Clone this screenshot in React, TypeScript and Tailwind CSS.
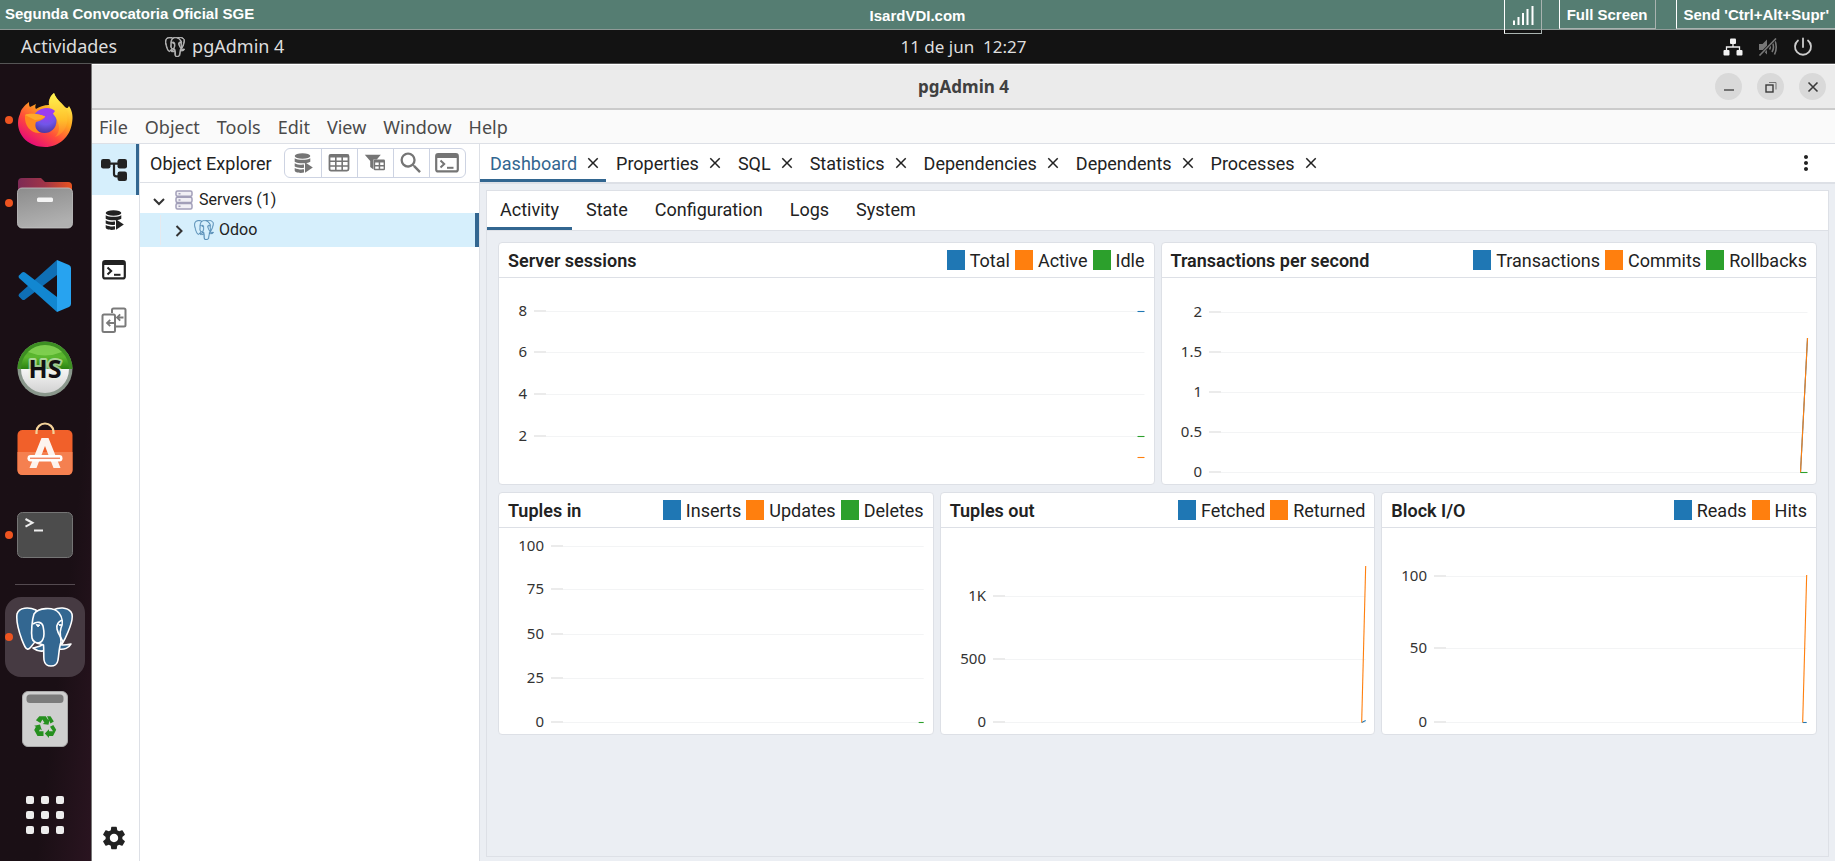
import React from "react";
import { MdClose, MdMoreVert, MdSearch, MdSettings } from "react-icons/md";
import { SiPostgresql } from "react-icons/si";

const BLUE = "#1f77b4";
const ORANGE = "#ff7f0e";
const GREEN = "#2ca02c";

/* ---------- Icons ---------- */

function DbPlay({ className }: { className: string }) {
  return (
    <svg viewBox="0 0 20 20" className={className} fill="currentColor" aria-hidden="true">
      <ellipse cx="9.5" cy="3" rx="7.8" ry="2.8" />
      <path d="M1.7 5.2c3 2.2 12.6 2.2 15.6 0v3.6c-3.5 2-12.1 2-15.6 0z" />
      <path d="M1.7 10.2c2.5 1.5 6.3 1.8 9.3 1.4v3.2c-3.3.5-7.3.1-9.3-1.2z" />
      <path d="M1.7 15c2.5 1.4 6.3 1.7 9.3 1.3v3.3c-4 .7-9.3.1-9.3-2z" />
      <path d="M12 9.3v10.4l7.8-5.2z" />
    </svg>
  );
}

function TreeIcon() {
  return (
    <svg viewBox="0 0 26 24" className="h-6 w-[26px]" fill="currentColor" aria-hidden="true">
      <rect x="0" y="1" width="9.5" height="9.5" rx="2.2" />
      <rect x="16.5" y="1" width="9.5" height="9.5" rx="2.2" />
      <rect x="16.5" y="13.5" width="9.5" height="9.5" rx="2.2" />
      <path d="M9 5.7h8M13 5.7v10.3q0 2.3 2.3 2.3h2" fill="none" stroke="currentColor" strokeWidth="2.2" />
    </svg>
  );
}

function TerminalIcon({ className }: { className: string }) {
  return (
    <svg viewBox="0 0 24 20" className={className} fill="none" stroke="currentColor" aria-hidden="true">
      <rect x="1.2" y="1.2" width="21.6" height="17.2" rx="2" strokeWidth="2.2" />
      <path d="M1.5 3.2h21" strokeWidth="3.6" />
      <path d="M5.5 7.5l3.7 3.5-3.7 3.5" strokeWidth="2" />
      <path d="M12 14.8h6.5" strokeWidth="2" />
    </svg>
  );
}

function CompareIcon() {
  return (
    <svg viewBox="0 0 26 26" className="size-[26px]" fill="none" stroke="currentColor" strokeWidth="2" aria-hidden="true">
      <path d="M11 6V3q0-1.5 1.5-1.5h10.500q1.500 0 1.500 1.500v15q0 1.500-1.500 1.500h-8" />
      <rect x="1.5" y="7.5" width="12.5" height="17.5" rx="1.5" />
      <path d="M6 16h8M9.2 12.8L6 16l3.2 3.2M16 10.5h6.5M19.2 7.3L16 10.5l3.2 3.2" strokeWidth="1.8" />
    </svg>
  );
}

function GridIcon() {
  return (
    <svg viewBox="0 0 22 20" className="h-5 w-[22px]" fill="none" stroke="currentColor" aria-hidden="true">
      <rect x="1.5" y="1.8" width="19" height="15.8" rx="1.5" strokeWidth="1.8" />
      <path d="M1.5 3h19" strokeWidth="3" />
      <path d="M1.5 8.3h19M1.5 13h19M7.8 3v15M14.2 3v15" strokeWidth="1.6" />
    </svg>
  );
}

function FilterGridIcon() {
  return (
    <svg viewBox="0 0 22 20" className="h-5 w-[22px]" fill="currentColor" aria-hidden="true">
      <path d="M.8 1.8h16l-4 4.8h-3.300v9.800l-3.300-2.400V8z" />
      <rect x="9.8" y="6.6" width="11.2" height="10.6" rx="1.2" />
      <path d="M11.2 9.6h3.500v2.300h-3.500zM16.200 9.600h3.400v2.300h-3.400zM11.200 13.400h3.500v2.300h-3.500zM16.200 13.400h3.400v2.300h-3.400z" fill="#fff" />
    </svg>
  );
}

function ServersIcon() {
  return (
    <svg viewBox="0 0 18 20" className="h-5 w-[18px]" fill="#f1f0f5" stroke="#a29fb9" strokeWidth="1.5" aria-hidden="true">
      <rect x="1" y="1" width="16" height="5.3" rx="1.5" />
      <rect x="1" y="7.3" width="16" height="5.3" rx="1.5" />
      <rect x="1" y="13.6" width="16" height="5.3" rx="1.5" />
      <path d="M3.5 3.7h2M3.5 10h2M3.5 16.2h2" />
    </svg>
  );
}

function Chevron({ open }: { open?: boolean }) {
  return (
    <svg viewBox="0 0 14 14" className="size-[14px]" fill="none" stroke="#333" strokeWidth="2" aria-hidden="true">
      <path d={open ? "M2 6L7 11l5-5" : "M4.5 3L9.5 8l-5 5"} />
    </svg>
  );
}

function Firefox() {
  return (
    <svg viewBox="0 0 56 56" className="size-14" aria-hidden="true">
      <defs>
        <linearGradient id="ffBody" x1="0.85" y1="0.1" x2="0.25" y2="1">
          <stop offset="0" stopColor="#fff44f" />
          <stop offset="0.35" stopColor="#ffa51f" />
          <stop offset="0.65" stopColor="#ff4a3c" />
          <stop offset="1" stopColor="#e3057e" />
        </linearGradient>
        <radialGradient id="ffBall" cx="0.55" cy="0.2" r="0.9">
          <stop offset="0" stopColor="#a43af5" />
          <stop offset="0.5" stopColor="#7156e8" />
          <stop offset="1" stopColor="#41308f" />
        </radialGradient>
        <linearGradient id="ffFlame" x1="0.6" y1="0" x2="0.6" y2="1">
          <stop offset="0" stopColor="#fff552" />
          <stop offset="0.6" stopColor="#ffc02b" />
          <stop offset="1" stopColor="#ff7a2a" />
        </linearGradient>
      </defs>
      <path d="M3 22c1-5 4-8 9-12 0 2 0 4 1 5l6-3c-1 2-1 4 0 5 3-2 8-4 13-4-1-5 2-10 5-12 2 6 7 9 11 14 2 2 3 1 4-1 4 6 4 12 3 17-2 14-13 24-27 24C12 55 1 44 1 31c0-4 1-7 2-9z" fill="url(#ffBody)" />
      <circle cx="27.5" cy="29" r="12" fill="url(#ffBall)" />
      <path d="M37 1c2 7 9 11 12 18 4 10 0 22-11 26 4-4 5-9 3-14-1-6-6-9-7-13-3-6-2-13 3-17z" fill="url(#ffFlame)" />
      <path d="M8 23c5-2 11-1 16 0 3 0 4 1 4 2-2 3-6 4-9 5-2 5 1 9 5 11-10 1-17-7-16-18z" fill="#ff8a1e" />
      <path d="M8 23c5-2 11-1 16 0 3 0 4 1 4 2-3 2-7 3-10 3z" fill="#ffa92b" />
      <path d="M20 20c5-5 14-5 18-1l-3 4-8 1-4-2z" fill="#9a3df2" />
    </svg>
  );
}

function Files() {
  return (
    <svg viewBox="0 0 56 52" className="h-[52px] w-14" aria-hidden="true">
      <defs>
        <linearGradient id="flBack" x1="0" y1="0" x2="1" y2="0">
          <stop offset="0" stopColor="#7d2a55" />
          <stop offset="0.5" stopColor="#a03447" />
          <stop offset="1" stopColor="#e95420" />
        </linearGradient>
        <linearGradient id="flFront" x1="0" y1="0" x2="0.3" y2="1">
          <stop offset="0" stopColor="#8c8c8c" />
          <stop offset="1" stopColor="#b0b0b0" />
        </linearGradient>
      </defs>
      <path d="M1 5q0-4 4-4h19l4 4h23q4 0 4 4v16H1z" fill="url(#flBack)" />
      <rect x="0.5" y="11" width="55" height="40" rx="4.5" fill="url(#flFront)" stroke="#c6c6c6" strokeWidth="0.8" />
      <rect x="20" y="20.5" width="16" height="4.5" rx="1.5" fill="#f4f4f4" />
    </svg>
  );
}

function VsCode() {
  return (
    <svg viewBox="0 0 54 54" className="size-[54px]" aria-hidden="true">
      <path d="M39 1L1 35q-1 1.5 0 2.5l3 3q1.5 1 3 0L39 16z" fill="#0f6fb5" />
      <path d="M39 53L1 19q-1-1.5 0-2.5l3-3q1.5-1 3 0L39 38z" fill="#1287d1" />
      <path d="M39 1l12 5q2 1 2 3v36q0 2-2 3l-12 5z" fill="#27a3f0" />
    </svg>
  );
}

function HeidiSql() {
  return (
    <svg viewBox="0 0 56 56" className="size-14" aria-hidden="true">
      <defs>
        <linearGradient id="hsTop" x1="0" y1="0" x2="0" y2="1">
          <stop offset="0" stopColor="#4fa82a" />
          <stop offset="0.5" stopColor="#5cb82f" />
          <stop offset="1" stopColor="#2b8210" />
        </linearGradient>
        <linearGradient id="hsLow" x1="0" y1="0" x2="0" y2="1">
          <stop offset="0" stopColor="#f6f6f6" />
          <stop offset="1" stopColor="#d2d2d2" />
        </linearGradient>
      </defs>
      <circle cx="28" cy="28" r="27.5" fill="#8a978c" />
      <path d="M.5 28a27.5 27.5 0 0 1 55 0z" fill="#3d8f22" />
      <path d="M4 28a24 24 0 0 1 48 0z" fill="url(#hsTop)" />
      <path d="M4 28a24 24 0 0 0 48 0z" fill="url(#hsLow)" />
      <path d="M11 11a24 24 0 0 1 34 0q-17 7-34 0z" fill="#8fda5c" opacity="0.7" />
      <text x="28" y="37" textAnchor="middle" fontSize="25" fontWeight="700" fontFamily="Open Sans, sans-serif" fill="#111" stroke="#e8f3e0" strokeOpacity="0.6" strokeWidth="4" strokeLinejoin="round" paintOrder="stroke">HS</text>
    </svg>
  );
}

function Software() {
  return (
    <svg viewBox="0 0 56 60" className="h-[60px] w-14" aria-hidden="true">
      <rect x="0.5" y="8" width="55" height="45" rx="5" fill="#f1602a" />
      <path d="M.5 30h55v18q0 5-5 5h-45q-5 0-5-5z" fill="#f58050" />
      <path d="M19.5 12V9.5a8.5 8 0 0 1 17 0V12" fill="none" stroke="#f3d29a" strokeWidth="2.2" />
      <path d="M24.5 16h7l12 30h-7L28 24l-8.500 22h-7z" fill="#fdf3ee" />
      <rect x="10.5" y="33" width="35" height="6.5" rx="3.2" fill="#fff" />
      <path d="M13 36.3h30" stroke="#f08a68" strokeWidth="1.5" />
    </svg>
  );
}

function TerminalApp() {
  return (
    <svg viewBox="0 0 56 46" className="h-[46px] w-14" aria-hidden="true">
      <rect x="0.5" y="0.5" width="55" height="45" rx="5" fill="#4c4c4c" stroke="#757575" />
      <path d="M8.5 7l7 3.8-7 3.8" fill="none" stroke="#eee" strokeWidth="2" />
      <path d="M17 18.5h9" stroke="#eee" strokeWidth="2" />
    </svg>
  );
}

function Elephant() {
  return (
    <svg viewBox="0 0 60 62" className="h-[62px] w-[60px]" fill="#336791" stroke="#fff" strokeWidth="1.6" strokeLinejoin="round" aria-hidden="true">
      <path d="M38 4c6-3 14-3 18 2 3 4 0 13-3 20-2 5-4 9-6 12l-5-6z" />
      <path d="M21 4C14 1 4 1 2 8c-1 7 2 18 5 26 2 5 4 10 6 9 2 0 4-4 7-7l4-20z" />
      <path d="M18 42c3-1 6-1 9-3l4-1v6c-4 2-9 1-13-2z" />
      <path d="M43 38c3 2 8 1 13 0-2 4-7 6-12 5z" />
      <path d="M19 8c4-6 19-8 25-1 4 5 4 11 2 15-2 5 0 9 0 14-2 6-2 12-3 18-1 8-13 8-14 0-.5-5 0-10-.5-15C27 38 18 38 17 32c-1-6 0-18 2-24z" />
      <path d="M18 18c4-3 9-2 10 2 1 5 2 9 0 13-1 3-4 4-6 4" fill="none" />
      <path d="M47 14c-4 2-6 5-5 9 1 5 4 8 6 13" fill="none" />
      <path d="M21 18.5l4 .5-2 2zM43.5 18.5l3 0-1.5 1.5z" fill="#fff" strokeWidth="0.8" />
    </svg>
  );
}

function Trash() {
  return (
    <svg viewBox="0 0 46 56" className="h-14 w-[46px]" aria-hidden="true">
      <rect x="0.5" y="0.5" width="45" height="55" rx="5.5" fill="#cfcfcf" stroke="#a9a9a9" />
      <rect x="4.5" y="3.5" width="37" height="8.5" rx="3.5" fill="#7c7c7c" />
      <g fill="#26901f">
        <path d="M17.3 25.2h6.500l2.300 3.500 1.600-1-1.200 6-5.800-.8 1.700-1.100-2-3.300-2 3.500-4.500-2.700z" />
        <path d="M25 25.2h3.500l3.300 5.300-3.300 2z" />
        <path d="M31.3 34l2.900 4.800-3.200 6.200h-4v1.900L22.800 42.500l4.200-4.300v2h4l-3-4.500z" />
        <path d="M21.5 45h-6l-3.300-6 1.700-3.200-1.700-1 5.800-1.300 1.800 5.700-1.700-1-1.200 2h4.600z" />
      </g>
    </svg>
  );
}

function NetworkIcon() {
  return (
    <svg viewBox="0 0 20 18" className="h-[18px] w-5" fill="#f2f2f2" aria-hidden="true">
      <rect x="7" y="0.5" width="6" height="5.5" rx="1" />
      <rect x="0.5" y="12" width="6" height="5.5" rx="1" />
      <rect x="13.5" y="12" width="6" height="5.5" rx="1" />
      <path d="M10 5v4M3.5 13V9h13v4" fill="none" stroke="#f2f2f2" strokeWidth="1.3" />
    </svg>
  );
}

function MutedIcon() {
  return (
    <svg viewBox="0 0 20 18" className="h-[18px] w-5" fill="none" stroke="#777" strokeWidth="1.6" aria-hidden="true">
      <path d="M1 6h3.5L9 1.5v15L4.5 12H1z" fill="#777" stroke="none" />
      <path d="M11.5 6.5q1.5 2.5 0 5M14 4q3 5 0 10M16.5 1.5q3.5 7.5 0 15" />
      <path d="M18 .5L1.5 17.5" stroke="#131313" strokeWidth="3" />
      <path d="M18 .5L1.5 17.5" />
    </svg>
  );
}

function PowerIcon() {
  return (
    <svg viewBox="0 0 20 20" className="size-5" fill="none" stroke="#ccc" strokeWidth="1.8" strokeLinecap="round" aria-hidden="true">
      <path d="M10 1.5v8.5M5 3.5a8 8 0 1 0 10 0" />
    </svg>
  );
}

/* ---------- Remote desktop header and system bar ---------- */

function ViewerBar() {
  return (
    <header className="grid h-[30px] shrink-0 grid-cols-3 border-b border-[#8f9a97] bg-[#557d72] font-['Liberation_Sans',Arial,sans-serif] text-[15px] leading-[27px] font-bold text-white">
      <span className="pl-[5px]">Segunda Convocatoria Oficial SGE</span>
      <span className="pt-[2px] text-center">IsardVDI.com</span>
      <div className="flex items-start justify-end">
        <button aria-label="Signal" className="relative z-10 mr-[17px] flex h-[34px] w-[38px] items-start justify-center border-r border-b border-l border-r-[#a9b3b0] border-b-[#a9b3b0] border-l-white pt-[5px]">
          <svg viewBox="0 0 22 20" className="h-5 w-[22px]" stroke="#fff" strokeWidth="2" aria-hidden="true">
            <path d="M2 20v-4.5M6.5 20v-8M11 20V8M15.5 20V4M20.5 20V1" />
          </svg>
        </button>
        <button className="mr-5 h-[29px] border-r border-b border-l border-r-[#a9b3b0] border-b-[#a9b3b0] border-l-white px-[7px]">Full Screen</button>
        <button className="h-[29px] border-b border-l border-b-[#a9b3b0] border-l-white pr-[6px] pl-[7px]">Send 'Ctrl+Alt+Supr'</button>
      </div>
    </header>
  );
}

function SystemBar() {
  return (
    <div className="grid h-[34px] shrink-0 grid-cols-[1fr_auto_1fr] items-center border-b border-[#555] bg-[#131313] font-['Noto_Sans',sans-serif] text-[18px] text-[#dedede]">
      <div className="flex items-center pl-[21px]">
        <button>Actividades</button>
        <button className="ml-12 flex items-center gap-[7px]">
          <SiPostgresql className="size-5 text-[#bdbdbd]" stroke="currentColor" strokeWidth="1" />
          pgAdmin 4
        </button>
      </div>
      <button className="pl-[92px] text-[17px] whitespace-pre">11 de jun  12:27</button>
      <div className="flex items-center justify-end gap-[15px] pr-[22px]">
        <NetworkIcon />
        <MutedIcon />
        <PowerIcon />
      </div>
    </div>
  );
}

/* ---------- Dock ---------- */

function DockItem({ label, running, children }: { label: string; running?: boolean; children: React.ReactNode }) {
  return (
    <button aria-label={label} className="relative flex h-[83px] w-full items-center justify-center">
      {running && <span className="absolute top-1/2 left-[5px] size-2 -translate-y-1/2 rounded-full bg-[#ee5420]" />}
      {children}
    </button>
  );
}

function Dock() {
  return (
    <nav className="flex w-[92px] shrink-0 flex-col border-r border-[#777] bg-linear-to-br from-[#1a0f15] from-70% to-[#2a1420] pt-[14px] pr-px">
      <DockItem label="Firefox" running><Firefox /></DockItem>
      <DockItem label="Archivos" running><Files /></DockItem>
      <DockItem label="Visual Studio Code"><VsCode /></DockItem>
      <DockItem label="HeidiSQL"><HeidiSql /></DockItem>
      <DockItem label="Software"><Software /></DockItem>
      <DockItem label="Terminal" running><TerminalApp /></DockItem>
      <hr className="mx-[15px] mt-2 mb-3 border-[#544a50]" />
      <button aria-label="pgAdmin 4" className="relative mx-[5px] flex h-20 items-center justify-center rounded-2xl bg-[#463a42]">
        <span className="absolute top-1/2 left-0 size-2 -translate-y-1/2 rounded-full bg-[#ee5420]" />
        <Elephant />
      </button>
      <DockItem label="Papelera"><Trash /></DockItem>
      <button aria-label="Aplicaciones" className="mt-auto mb-[27px] grid grid-cols-3 gap-[7px] self-center">
        {Array.from({ length: 9 }, (_, i) => (
          <span key={i} className="size-2 rounded-[2px] bg-[#ededed]" />
        ))}
      </button>
    </nav>
  );
}

/* ---------- Window chrome ---------- */

function TitleBar() {
  const round = "flex size-[27px] items-center justify-center rounded-full bg-[#d9d9d9]";
  return (
    <div className="grid h-[46px] shrink-0 grid-cols-[1fr_auto_1fr] items-center border-t border-b-2 border-t-white border-b-[#cbcbcb] bg-[#ebebeb] font-['Noto_Sans',sans-serif]">
      <h1 className="col-start-2 text-[17px] font-bold text-[#404040]">pgAdmin 4</h1>
      <div className="flex justify-end gap-[15px] pr-[9px]">
        <button aria-label="Minimizar" className={round}>
          <svg viewBox="0 0 12 12" className="size-3" aria-hidden="true"><path d="M1 9h10" stroke="#3a3a3a" strokeWidth="1.3" /></svg>
        </button>
        <button aria-label="Restaurar" className={round}>
          <svg viewBox="0 0 12 12" className="size-3" fill="none" stroke="#3a3a3a" strokeWidth="1.4" aria-hidden="true">
            <rect x="1" y="4" width="7" height="7" />
            <path d="M4 1.5h7v7" stroke="#777" strokeWidth="1" />
          </svg>
        </button>
        <button aria-label="Cerrar" className={round}>
          <svg viewBox="0 0 12 12" className="size-3" aria-hidden="true"><path d="M1.5 1.5l9 9M10.5 1.5l-9 9" stroke="#3a3a3a" strokeWidth="1.6" /></svg>
        </button>
      </div>
    </div>
  );
}

function MenuBar() {
  return (
    <nav className="flex h-[34px] shrink-0 items-center gap-[17px] border-b border-[#dde0e6] bg-[#fafafa] pt-px pl-[7px] font-['Noto_Sans',sans-serif] text-[18px] text-[#4a4a4a]">
      {["File", "Object", "Tools", "Edit", "View", "Window", "Help"].map((m) => (
        <button key={m}>{m}</button>
      ))}
    </nav>
  );
}

function Rail() {
  const item = "flex h-[50px] items-center justify-center pr-[3px]";
  return (
    <div className="flex w-12 shrink-0 flex-col items-stretch border-r border-[#dde0e6] bg-white pb-[7px] text-[#222]">
      <button aria-label="Object Explorer" className="flex h-[51px] items-center justify-center border-r-[3px] border-[#326690] bg-[#d6effc]"><TreeIcon /></button>
      <button aria-label="Query Tool Workspace" className={item}><DbPlay className="size-5" /></button>
      <button aria-label="PSQL Tool Workspace" className={item}><TerminalIcon className="h-5 w-6" /></button>
      <button aria-label="Schema Diff Workspace" className="flex h-[50px] items-center justify-center pr-[3px] text-[#7a7a7a]"><CompareIcon /></button>
      <button aria-label="Preferences" className="mt-auto flex h-8 items-center justify-center pr-[3px]"><MdSettings className="size-7" /></button>
    </div>
  );
}

function Explorer() {
  const tool = "flex w-9 items-center justify-center border-l border-[#cdd3e2] first:border-l-0";
  return (
    <aside className="flex w-[340px] shrink-0 flex-col border-r border-[#dde0e6] bg-white">
      <div className="flex h-[39px] shrink-0 items-center border-b border-[#dde0e6] pl-[10px]">
        <h2 className="text-[18px] text-[#222]">Object Explorer</h2>
        <div className="ml-3 flex h-[30px] rounded-md border border-[#cdd3e2] text-[#757575]">
          <button aria-label="Query Tool" className={tool}><DbPlay className="size-5" /></button>
          <button aria-label="View Data" className={tool}><GridIcon /></button>
          <button aria-label="Filtered Rows" className={tool}><FilterGridIcon /></button>
          <button aria-label="Search Objects" className={tool}><MdSearch className="size-7" /></button>
          <button aria-label="PSQL Tool" className={tool}><TerminalIcon className="h-5 w-6" /></button>
        </div>
      </div>
      <ul role="tree" className="text-[16px] text-[#222]">
        <li role="treeitem" aria-expanded="true" className="flex h-[30px] items-center pt-[3px] pl-[12px]">
          <Chevron open />
          <span className="mr-[6px] ml-[9px]"><ServersIcon /></span>
          Servers (1)
        </li>
        <li role="treeitem" aria-expanded="false" className="flex h-[34px] items-center border-r-4 border-[#326690] bg-[#d6effc] pb-px pl-5">
          <span className="mr-[11px] h-[30px] w-px bg-[#e6e9ee]" />
          <Chevron />
          <span className="mr-[5px] ml-[8px] text-[#4a83ae]"><SiPostgresql className="size-5" stroke="currentColor" strokeWidth="0.3" /></span>
          Odoo
        </li>
      </ul>
    </aside>
  );
}

/* ---------- Charts ---------- */

type Tick = [label: string, y: number];
type Line = { color: string; points: string };

interface ChartProps {
  title: string;
  legend: [string, string][];
  axis: number;
  ticks: Tick[];
  lines: Line[];
}

/* Series points are measured in pixels from the right edge of the plot. */
function ChartCard({ title, legend, axis, ticks, lines }: ChartProps) {
  return (
    <section className="min-w-0 flex-1 rounded-[4px] border border-[#dde0e6] bg-white">
      <div className="flex h-[35px] items-center justify-between border-b border-[#dde0e6] px-[9px] text-[18px] text-[#222]">
        <h3 className="font-semibold">{title}</h3>
        <ul className="flex gap-[5px]">
          {legend.map(([name, color]) => (
            <li key={name} className="flex items-center gap-[5px]">
              <svg className="h-5 w-[18px]" aria-hidden="true"><rect width="18" height="20" fill={color} /></svg>
              {name}
            </li>
          ))}
        </ul>
      </div>
      <div className="pr-[9px]">
        <svg className="block h-[206px] w-full overflow-visible" role="img" aria-label={title}>
          {ticks.map(([label, y]) => (
            <g key={label}>
              <text x={axis - 7} y={y + 5} textAnchor="end" fontSize="15" fontFamily="Noto Sans, sans-serif" fill="#333">{label}</text>
              <line x1={axis} x2="100%" y1={y + 0.5} y2={y + 0.5} stroke="#f3f4f5" />
              <line x1={axis} x2={axis + 12} y1={y} y2={y} stroke="#ebebeb" strokeWidth="2" />
            </g>
          ))}
          <svg x="100%" overflow="visible" fill="none">
            {lines.map((l, i) => (
              <polyline key={i} points={l.points} stroke={l.color} strokeWidth="1.1" />
            ))}
          </svg>
        </svg>
      </div>
    </section>
  );
}

function Dashboard() {
  return (
    <div className="flex flex-col gap-[7px] p-[11px]">
      <div className="flex gap-[6px]">
        <ChartCard
          title="Server sessions"
          legend={[["Total", BLUE], ["Active", ORANGE], ["Idle", GREEN]]}
          axis={35}
          ticks={[["8", 33], ["6", 74], ["4", 116], ["2", 158]]}
          lines={[
            { color: BLUE, points: "-7,33.5 0,33.5" },
            { color: ORANGE, points: "-7,179.5 0,179.5" },
            { color: GREEN, points: "-7,158.5 0,158.5" },
          ]}
        />
        <ChartCard
          title="Transactions per second"
          legend={[["Transactions", BLUE], ["Commits", ORANGE], ["Rollbacks", GREEN]]}
          axis={47}
          ticks={[["2", 34], ["1.5", 74], ["1", 114], ["0.5", 154], ["0", 194]]}
          lines={[
            { color: BLUE, points: "-7,194.5 0,60" },
            { color: ORANGE, points: "-7,194.5 0,60" },
            { color: GREEN, points: "-7,194.5 0,194.5" },
          ]}
        />
      </div>
      <div className="flex gap-[6px]">
        <ChartCard
          title="Tuples in"
          legend={[["Inserts", BLUE], ["Updates", ORANGE], ["Deletes", GREEN]]}
          axis={52}
          ticks={[["100", 18], ["75", 61], ["50", 106], ["25", 150], ["0", 194]]}
          lines={[{ color: GREEN, points: "-5,194.5 0,194.5" }]}
        />
        <ChartCard
          title="Tuples out"
          legend={[["Fetched", BLUE], ["Returned", ORANGE]]}
          axis={52}
          ticks={[["1K", 68], ["500", 131], ["0", 194]]}
          lines={[
            { color: BLUE, points: "-4,194.5 0,192.5" },
            { color: ORANGE, points: "-4,194.5 0,38" },
          ]}
        />
        <ChartCard
          title="Block I/O"
          legend={[["Reads", BLUE], ["Hits", ORANGE]]}
          axis={52}
          ticks={[["100", 48], ["50", 120], ["0", 194]]}
          lines={[
            { color: BLUE, points: "-4,194.5 0,194.5" },
            { color: ORANGE, points: "-4,194.5 0,47" },
          ]}
        />
      </div>
    </div>
  );
}

function Workspace() {
  const tabs = ["Dashboard", "Properties", "SQL", "Statistics", "Dependencies", "Dependents", "Processes"];
  const inner = ["Activity", "State", "Configuration", "Logs", "System"];
  return (
    <main className="flex min-w-0 flex-1 flex-col bg-[#ebeef3]">
      <div className="flex h-10 shrink-0 items-stretch border-b-2 border-[#dde0e6] bg-white text-[18px] text-[#222]">
        {tabs.map((t, i) => (
          <div key={t} className={i === 0 ? "flex items-center gap-[7px] border-b-[3px] border-[#326690] pt-[3px] pr-[4px] pl-[10px] text-[#326690]" : "flex items-center gap-[7px] border-b-[3px] border-transparent pt-[3px] pr-[4px] pl-[10px]"}>
            <button>{t}</button>
            <button aria-label={`Close ${t}`} className="text-[#222]"><MdClose className="size-[18px]" /></button>
          </div>
        ))}
        <button aria-label="More" className="mr-[17px] ml-auto"><MdMoreVert className="size-6" /></button>
      </div>
      <div className="mx-[6px] mt-[6px] mb-1 flex flex-1 flex-col border border-[#dde0e6]">
        <div className="flex h-10 shrink-0 items-stretch gap-px border-b border-[#dde0e6] bg-white text-[18px] text-[#222]">
          {inner.map((t, i) => (
            <button key={t} className={i === 0 ? "border-b-[3px] border-[#326690] px-[13px]" : "border-b-[3px] border-transparent px-[13px]"}>{t}</button>
          ))}
        </div>
        <Dashboard />
      </div>
    </main>
  );
}

export default function App() {
  return (
    <div className="flex min-h-screen flex-col bg-white font-[Roboto,sans-serif]">
      <ViewerBar />
      <SystemBar />
      <div className="flex flex-1">
        <Dock />
        <div className="flex min-w-0 flex-1 flex-col">
          <TitleBar />
          <MenuBar />
          <div className="flex flex-1">
            <Rail />
            <Explorer />
            <Workspace />
          </div>
        </div>
      </div>
    </div>
  );
}
